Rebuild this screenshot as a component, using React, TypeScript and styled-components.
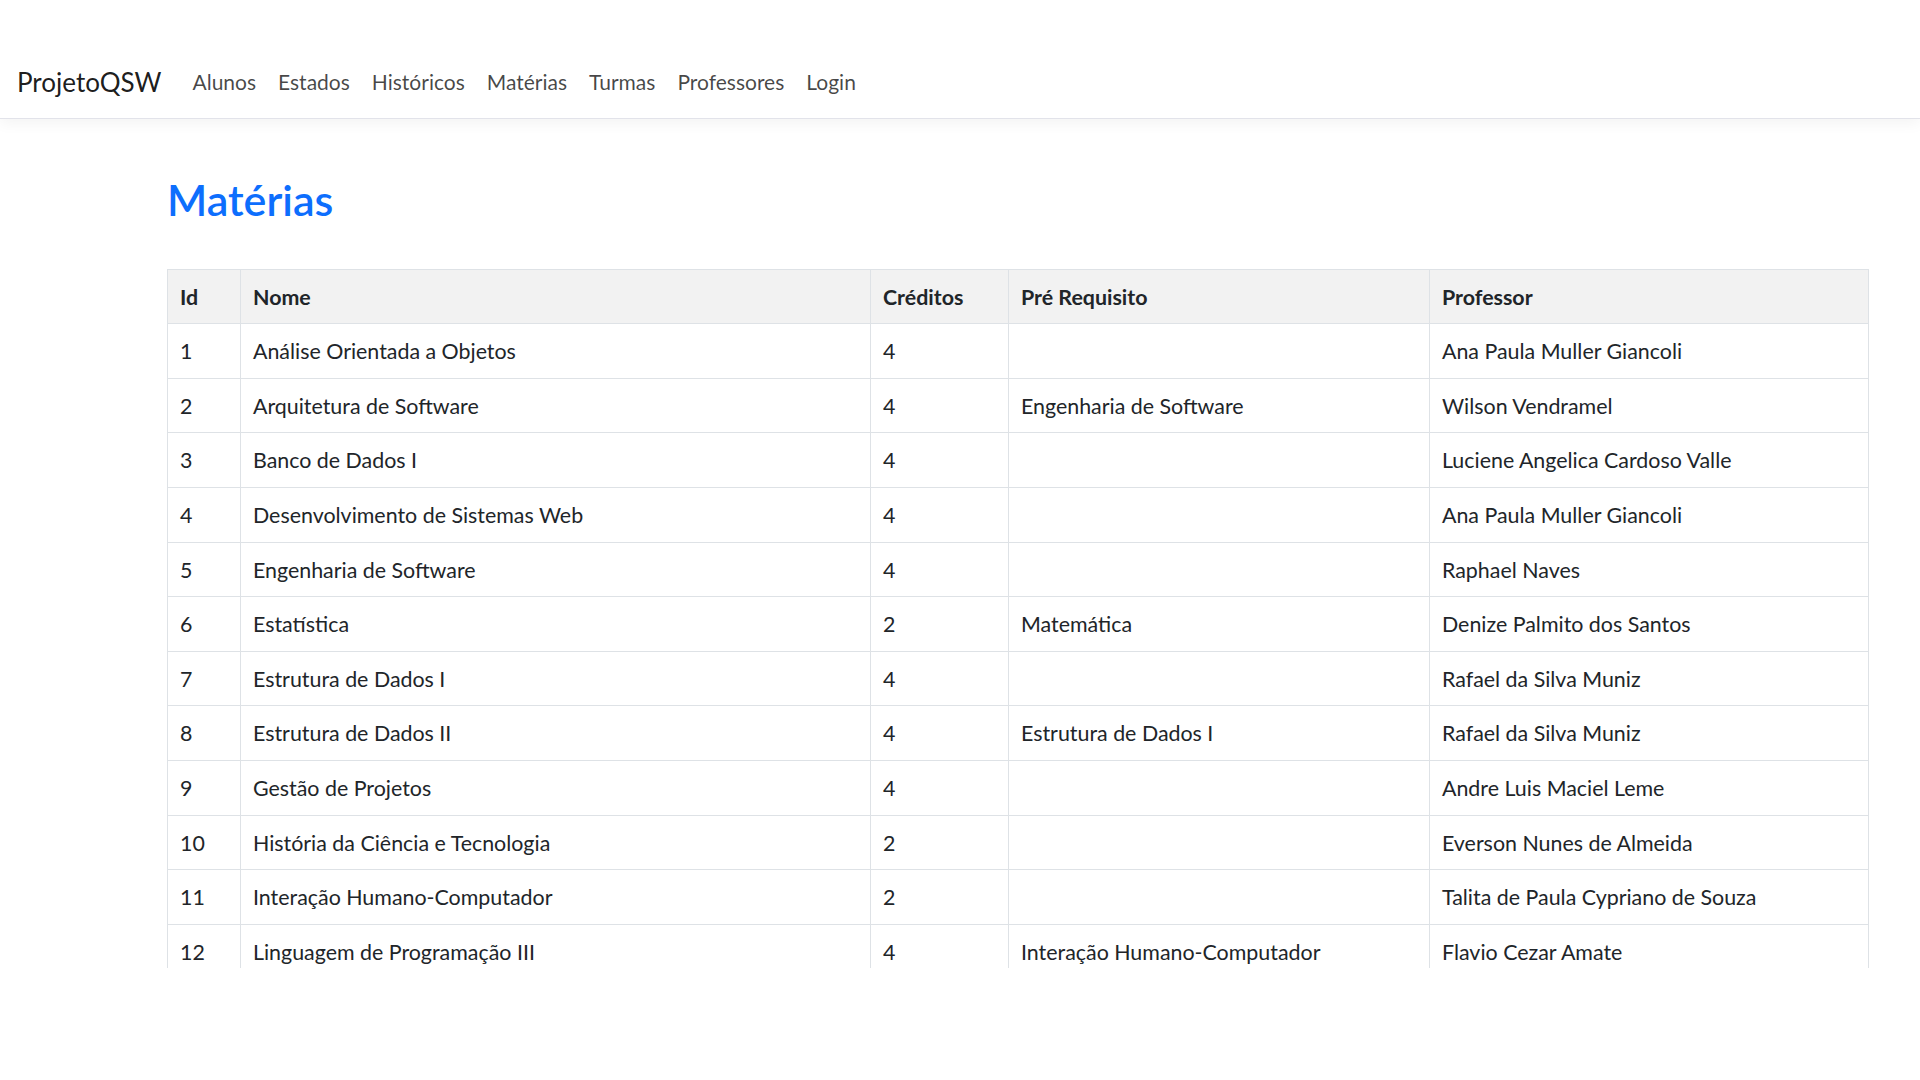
import React from "react";
import styled, { createGlobalStyle } from "styled-components";

const GlobalStyle = createGlobalStyle`
  html, body {
    margin: 0;
    padding: 0;
    background: #ffffff;
    font-family: Lato, "Noto Sans", "Liberation Sans", sans-serif;
    color: #212529;
  }
  * { box-sizing: border-box; }
`;

const Page = styled.div`
  min-height: 1080px;
  background: #ffffff;
`;

const NavBar = styled.nav`
  height: 119px;
  padding: 46px 0 0 17px;
  display: flex;
  align-items: center;
  background: #ffffff;
  border-bottom: 1px solid #e2e3ea;
  box-shadow: 0 4px 14px rgba(0, 0, 0, 0.05);
  position: relative;
  z-index: 1;
`;

const Brand = styled.a`
  font-size: 26px;
  color: rgba(0, 0, 0, 0.9);
  text-decoration: none;
  margin-right: 20px;
  line-height: 1.5;
`;

const NavList = styled.ul`
  display: flex;
  list-style: none;
  margin: 0;
  padding: 0;
`;

const NavLink = styled.a`
  display: block;
  padding: 10px 11px;
  font-size: 21px;
  line-height: 1.5;
  color: rgba(0, 0, 0, 0.72);
  text-decoration: none;
`;

const Main = styled.main`
  padding: 55px 51px 0 167px;
`;

const Title = styled.h1`
  margin: 0 0 43px 0;
  font-size: 43px;
  line-height: 1.2;
  font-weight: 600;
  color: #0d6efd;
`;

const TableWrap = styled.div`
  height: 699px;
  overflow: hidden;
`;

const Table = styled.table`
  width: 100%;
  table-layout: fixed;
  border-collapse: collapse;
  font-size: 21.4px;
  line-height: 30px;
  color: #212529;
`;

const HeadCell = styled.th`
  text-align: left;
  font-weight: 700;
  background: #f2f2f2;
  padding: 12px 12px 11.6px;
  border: 1px solid #dee2e6;
`;

const Cell = styled.td`
  padding: 12px 12px 11.6px;
  border: 1px solid #dee2e6;
  white-space: nowrap;
  overflow: hidden;
`;

type Materia = {
  id: number;
  nome: string;
  creditos: number;
  pre: string;
  professor: string;
};

const materias: Materia[] = [
  { id: 1, nome: "Análise Orientada a Objetos", creditos: 4, pre: "", professor: "Ana Paula Muller Giancoli" },
  { id: 2, nome: "Arquitetura de Software", creditos: 4, pre: "Engenharia de Software", professor: "Wilson Vendramel" },
  { id: 3, nome: "Banco de Dados I", creditos: 4, pre: "", professor: "Luciene Angelica Cardoso Valle" },
  { id: 4, nome: "Desenvolvimento de Sistemas Web", creditos: 4, pre: "", professor: "Ana Paula Muller Giancoli" },
  { id: 5, nome: "Engenharia de Software", creditos: 4, pre: "", professor: "Raphael Naves" },
  { id: 6, nome: "Estatística", creditos: 2, pre: "Matemática", professor: "Denize Palmito dos Santos" },
  { id: 7, nome: "Estrutura de Dados I", creditos: 4, pre: "", professor: "Rafael da Silva Muniz" },
  { id: 8, nome: "Estrutura de Dados II", creditos: 4, pre: "Estrutura de Dados I", professor: "Rafael da Silva Muniz" },
  { id: 9, nome: "Gestão de Projetos", creditos: 4, pre: "", professor: "Andre Luis Maciel Leme" },
  { id: 10, nome: "História da Ciência e Tecnologia", creditos: 2, pre: "", professor: "Everson Nunes de Almeida" },
  { id: 11, nome: "Interação Humano-Computador", creditos: 2, pre: "", professor: "Talita de Paula Cypriano de Souza" },
  { id: 12, nome: "Linguagem de Programação III", creditos: 4, pre: "Interação Humano-Computador", professor: "Flavio Cezar Amate" },
];

const navItems = ["Alunos", "Estados", "Históricos", "Matérias", "Turmas", "Professores", "Login"];

export default function App() {
  return (
    <Page>
      <GlobalStyle />
      <NavBar>
        <Brand href="#">ProjetoQSW</Brand>
        <NavList>
          {navItems.map((item) => (
            <li key={item}>
              <NavLink href="#">{item}</NavLink>
            </li>
          ))}
        </NavList>
      </NavBar>
      <Main>
        <Title>Matérias</Title>
        <TableWrap>
          <Table>
            <colgroup>
              <col style={{ width: 73 }} />
              <col style={{ width: 630 }} />
              <col style={{ width: 138 }} />
              <col style={{ width: 421 }} />
              <col />
            </colgroup>
            <thead>
              <tr>
                <HeadCell>Id</HeadCell>
                <HeadCell>Nome</HeadCell>
                <HeadCell>Créditos</HeadCell>
                <HeadCell>Pré Requisito</HeadCell>
                <HeadCell>Professor</HeadCell>
              </tr>
            </thead>
            <tbody>
              {materias.map((m) => (
                <tr key={m.id}>
                  <Cell>{m.id}</Cell>
                  <Cell>{m.nome}</Cell>
                  <Cell>{m.creditos}</Cell>
                  <Cell>{m.pre}</Cell>
                  <Cell>{m.professor}</Cell>
                </tr>
              ))}
            </tbody>
          </Table>
        </TableWrap>
      </Main>
    </Page>
  );
}
